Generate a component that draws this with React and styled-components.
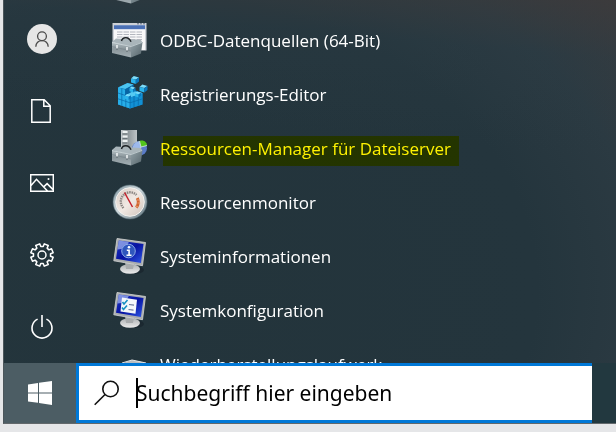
import React from "react";
import styled, { createGlobalStyle } from "styled-components";

const GlobalStyle = createGlobalStyle`
  * { box-sizing: border-box; }
  body {
    margin: 0;
    background: #e5e6e8;
    font-family: "Open Sans", "Noto Sans", sans-serif;
  }
`;

const Desktop = styled.div`
  display: flex;
  flex-direction: column;
  height: 100vh;
  padding: 0 0 8px 3px;
  background: #e5e6e8;
`;

const StartMenu = styled.main`
  display: flex;
  flex: 1;
  min-height: 0;
  overflow: hidden;
  border-left: 1px solid #4c565b;
  background:
    linear-gradient(185deg, rgba(60, 59, 60, 0.7), rgba(44, 60, 68, 0.35) 14%, rgba(36, 52, 59, 0) 38%),
    radial-gradient(ellipse 100% 130% at 25% 80%, #23343b 0%, #24353d 62%, #2b3a42 80%, #3d3b3d 98%);
`;

const Rail = styled.nav`
  display: flex;
  flex-direction: column;
  justify-content: flex-end;
  flex: none;
  width: 76px;
`;

const RailButton = styled.button`
  display: grid;
  place-items: center;
  flex: none;
  height: 72px;
  padding: 0;
  border: 0;
  background: transparent;
  color: #fff;
`;

const AppList = styled.ul`
  flex: 1;
  min-width: 0;
  margin: -40px 0 0;
  padding: 0 0 0 32px;
  list-style: none;
`;

const AppEntry = styled.button`
  display: flex;
  align-items: center;
  gap: 12px;
  width: 100%;
  height: 54px;
  padding: 0;
  border: 0;
  background: transparent;
  color: #fff;
  font: 17px/24px "Open Sans", "Noto Sans", sans-serif;
  text-align: left;
  white-space: nowrap;
`;

const AppIcon = styled.svg`
  flex: none;
  width: 36px;
  height: 36px;
  overflow: visible;
`;

const AppName = styled.span`
  position: relative;
  color: ${(p) => (p.$marked ? "#fff200" : "#fff")};
  &::after {
    content: ${(p) => (p.$marked ? '""' : "none")};
    position: absolute;
    inset: -1px -8px -5px 3px;
    background: #ff0;
    mix-blend-mode: multiply;
  }
`;

const Taskbar = styled.footer`
  display: flex;
  flex: none;
  height: 61px;
  padding-right: 24px;
  border-left: 1px solid #4c565b;
  border-bottom: 1px solid #62686b;
  background: #22383f;
`;

const StartButton = styled.button`
  display: grid;
  place-items: center;
  flex: none;
  width: 72px;
  padding: 0;
  border: 0;
  background: #4c5d64;
`;

const SearchBox = styled.label`
  display: flex;
  align-items: center;
  flex: 1;
  min-width: 0;
  padding-left: 15px;
  border: 3px solid #0078d7;
  border-right: 0;
  background: #fff;
`;

const Caret = styled.span`
  flex: none;
  width: 2px;
  height: 30px;
  margin-left: 16px;
  background: #000;
`;

const SearchInput = styled.input`
  flex: 1;
  min-width: 0;
  padding: 0;
  margin-left: -2px;
  border: 0;
  outline: 0;
  background: transparent;
  color: #000;
  font: 21px/32px "Noto Sans", "Open Sans", sans-serif;
  &::placeholder { color: #000; opacity: 1; }
`;

const UserIcon = () => (
  <svg width="30" height="30" viewBox="0 0 30 30" fill="none" stroke="#4a4a4a" strokeWidth="1.3">
    <circle cx="15" cy="15" r="15" fill="#e6e6e6" stroke="none" />
    <circle cx="15" cy="12.2" r="4.4" />
    <path d="M8.8 22.8c.3-3.700 2.800-6.100 6.200-6.100s5.900 2.400 6.200 6.100" />
  </svg>
);

const DocumentIcon = () => (
  <svg width="24" height="24" viewBox="0 0 24 24" fill="none" stroke="#fff" strokeWidth="1.5">
    <path d="M1.800.8h12.400l6 6v16.400H1.800zM13.800.8v6.400h6.400" />
  </svg>
);

const PictureIcon = () => (
  <svg width="24" height="18" viewBox="0 0 24 18" fill="none" stroke="#fff" strokeWidth="1.5">
    <path d="M.7.7h22.600v16.600H.7zM.8 11.800l5.700-6.500 11 11.600M13.700 12.900l3.400-3.300 6.200 6.300" />
    <circle cx="18.500" cy="5" r="1" fill="#fff" stroke="none" />
  </svg>
);

const gearPath = (() => {
  const pts = [];
  for (let i = 0; i < 8; i += 1) {
    const base = (i * Math.PI) / 4 + Math.PI / 8;
    [[-0.25, 8.6], [-0.19, 11.4], [0.19, 11.4], [0.25, 8.6]].forEach(([a, r]) => {
      pts.push(`${(12 + r * Math.cos(base + a)).toFixed(2)} ${(12 + r * Math.sin(base + a)).toFixed(2)}`);
    });
  }
  return `M${pts.join("L")}Z`;
})();

const GearIcon = () => (
  <svg width="24" height="24" viewBox="0 0 24 24" fill="none" stroke="#fff" strokeWidth="1.5" strokeLinejoin="round">
    <path d={gearPath} />
    <circle cx="12" cy="12" r="4" />
  </svg>
);

const PowerIcon = () => (
  <svg width="24" height="26" viewBox="0 0 24 26" fill="none" stroke="#fff" strokeWidth="1.6">
    <path d="M12 1v12M7.600 5.100a10 10 0 1 0 8.800 0" />
  </svg>
);

const WindowsLogo = () => (
  <svg width="24" height="24" viewBox="0 0 24 24" fill="#fff">
    <path d="M0 3.400 10 2v9.400H0zM11 1.800 24 0v11.400H11zM0 12.500h10v9.300L0 20.500zM11 12.500h13V24l-13-1.900z" />
  </svg>
);

const SearchIcon = () => (
  <svg width="26" height="26" viewBox="0 0 26 26" fill="none" stroke="#111" strokeWidth="1.600">
    <circle cx="16.500" cy="9" r="7.700" />
    <path d="M11 14.500.700 24.800" />
  </svg>
);

const Toolbox = ({ id }) => (
  <g>
    <defs>
      <linearGradient id={`${id}-front`} x1="0" y1="0" x2="0" y2="1">
        <stop offset="0" stopColor="#b4bfc3" />
        <stop offset=".45" stopColor="#8a969b" />
        <stop offset="1" stopColor="#a3afb4" />
      </linearGradient>
      <linearGradient id={`${id}-side`} x1="0" y1="0" x2="1" y2="1">
        <stop offset="0" stopColor="#93a2a8" />
        <stop offset="1" stopColor="#56656b" />
      </linearGradient>
    </defs>
    <path d="M0 19 4 15.500 29 17l1.500 3L19 24z" fill="#a9b5ba" />
    <path d="M0 19l19 4v11.500L0 30z" fill={`url(#${id}-front)`} />
    <path d="M19 23l11.500-4-1.500 11.500-10 4z" fill={`url(#${id}-side)`} />
    <path d="M0 19.500 19 23.500l11-4" fill="none" stroke="#d3dcdf" strokeWidth=".7" />
    <path d="M0 23.500 19 28" fill="none" stroke="#75828a" strokeWidth=".6" />
    <path d="M9.500 18c1-4.500 7.500-4.500 9.500.8" fill="none" stroke="#202528" strokeWidth="1.500" />
    <path d="M4.200 22h1.600v4H4.200zM14.200 24h1.600v4h-1.600z" fill="#eef2f3" />
    <path d="M4 26h2M14 28h2" stroke="#59646a" />
  </g>
);

const OdbcIcon = ({ id }) => (
  <AppIcon viewBox="0 0 36 36" aria-hidden="true">
    <path d="M.500 0h34v27.500H.500z" fill="#cdd1d7" />
    <path d="M2 2h31v25H2z" fill="#f8f8f9" />
    <path d="M2 2.200h31v4H2z" fill="#4a70b5" />
    <path d="M25 .800h2m1 0h2m1 0h2" stroke="#536277" strokeWidth=".9" />
    <path d="M5 9h25M5 11.500h25M5 14h25M5 16.500h25M5 19h25" stroke="#aaaeb7" strokeWidth=".9" strokeDasharray="5.500 1" />
    <Toolbox id={id} />
  </AppIcon>
);

const Cube = ({ x, y, s = 4 }) => (
  <g transform={`translate(${x} ${y})`}>
    <path d={`M${-s * 0.3} ${-s}L${s} ${-s * 0.6}L${s * 0.2} ${-s * 0.1}L${-s} ${-s * 0.4}z`} fill="#7bdcfb" />
    <path d={`M${-s} ${-s * 0.4}L${s * 0.2} ${-s * 0.1}V${s}L${-s} ${s * 0.6}z`} fill="#2bb4ec" />
    <path d={`M${s} ${-s * 0.6}L${s * 0.2} ${-s * 0.1}V${s}L${s} ${s * 0.4}z`} fill="#0a78bd" />
  </g>
);

const RegistryIcon = () => (
  <AppIcon viewBox="0 0 36 36" aria-hidden="true">
    <path d="M6 10.500 15.500 6l6 1.500v5l9 3.500v11.500L18 31.500 6 27.500z" fill="#0a72b4" />
    <path d="M6 10.500 15.500 6l6 1.500-8 4.500z" fill="#4cc4f0" />
    <path d="M6 10.500l7 2v6l5 1.500v11.500L6 27.500z" fill="#27aee8" />
    <path d="M13.500 12l8-4v6l-8 4.500z" fill="#0864a3" />
    <path d="M18 20.500l12.500-4.500v11.500L18 31.500z" fill="#1290d4" />
    <path d="M13 18.500l8.500-4.500 9 2L18 20.500z" fill="#55caf3" />
    <path d="M6 16l12 4M6 21.800l12 4 12.500-4M9.800 11.500V29M13.800 12.500v17.500M18 20.500v11M22 19v11M26.300 17.500v11" fill="none" stroke="#0768a8" strokeWidth=".7" />
    <Cube x={20.5} y={12.5} s={3} />
    <Cube x={16} y={20} s={3} />
    <Cube x={26} y={17.5} s={3} />
    <Cube x={23} y={3} s={4} />
    <Cube x={31.500} y={11.500} s={4} />
  </AppIcon>
);

const FileServerIcon = () => (
  <AppIcon viewBox="0 0 36 36" aria-hidden="true">
    <defs>
      <linearGradient id="tower">
        <stop offset="0" stopColor="#c8ced1" />
        <stop offset=".4" stopColor="#8b9498" />
        <stop offset="1" stopColor="#bdc4c7" />
      </linearGradient>
    </defs>
    <path d="M9-1h16v20H9z" fill="url(#tower)" />
    <path d="M10 0h6v18h-6z" fill="#a1a9ac" />
    <path d="M10.500 1h5M10.500 5.500h5M10.500 10h5" stroke="#edf2f2" strokeWidth="2" />
    <path d="M10.500 3h5M10.500 7.500h5M10.500 12h5" stroke="#5a666b" strokeWidth=".8" />
    <ellipse cx="27.500" cy="17.500" rx="7.500" ry="7" fill="#5a7cc8" />
    <path d="M20.500 18c0-5 4-8 7-8l1.500 5.500-5 7z" fill="#9db9ec" />
    <path d="M29 16l-1.500-6c4-1.500 7.500 1 7.500 4.500z" fill="#52c51c" />
    <path d="M24 22.500 29 16l6-1.500M29 16l-1.500-6" fill="none" stroke="#dcebe8" strokeWidth=".8" />
    <Toolbox id="server" />
  </AppIcon>
);

const GaugeIcon = () => (
  <AppIcon viewBox="0 0 36 36" aria-hidden="true">
    <defs>
      <linearGradient id="rim" x1="0" y1="0" x2="1" y2="1">
        <stop offset="0" stopColor="#7d939c" />
        <stop offset=".45" stopColor="#cfd9dd" />
        <stop offset="1" stopColor="#5b6f78" />
      </linearGradient>
      <linearGradient id="dial" x1="0" y1="0" x2="1" y2="1">
        <stop offset="0" stopColor="#d6cbc3" />
        <stop offset=".5" stopColor="#f1e9e3" />
        <stop offset="1" stopColor="#cfc3bb" />
      </linearGradient>
    </defs>
    <circle cx="18" cy="17" r="17" fill="url(#rim)" stroke="#566c75" strokeWidth=".6" />
    <circle cx="18" cy="17" r="14.300" fill="url(#dial)" stroke="#f2f2f0" strokeWidth="1" />
    <path d="M11.500 23a9 9 0 0 1 13-13" fill="none" stroke="#8b8683" strokeWidth="2.400" strokeDasharray="1.500 .8" />
    <path d="M25.300 13a9 9 0 0 1-1 9.500" fill="none" stroke="#d2652f" strokeWidth="3" />
    <path d="M25.500 18h3M25 15h3M24 21l2 1" stroke="#f3b18f" strokeWidth=".7" />
    <path d="M12.500 7.500 20.500 22" stroke="#c4202b" strokeWidth="1.500" />
  </AppIcon>
);

const MonitorIcon = ({ id, children }) => (
  <AppIcon viewBox="0 0 36 36" aria-hidden="true">
    <defs>
      <linearGradient id={`${id}-screen`} x1="0" y1="0" x2="1" y2="1">
        <stop offset="0" stopColor="#2038c8" />
        <stop offset=".5" stopColor="#0612a0" />
        <stop offset="1" stopColor="#2f58e6" />
      </linearGradient>
      <linearGradient id={`${id}-base`} x1="0" y1="0" x2="0" y2="1">
        <stop offset="0" stopColor="#aeb1b3" />
        <stop offset="1" stopColor="#ececec" />
      </linearGradient>
    </defs>
    <ellipse cx="23" cy="31" rx="9" ry="4" fill="#152229" opacity=".6" />
    <ellipse cx="18" cy="30" rx="10" ry="4.800" fill={`url(#${id}-base)`} />
    <path d="M13 23l9 2-1 5h-7z" fill="#a8abad" />
    <path d="M5-.500 33.500 3.500l-3 23.200L1.800 21.800z" fill="#a9acae" stroke="#d4d5d6" strokeWidth=".8" />
    <path d="M6.800 1.500l24.700 3.500-2.600 19L4 19.700z" fill={`url(#${id}-screen)`} />
    <path d="M6.800 1.500l10 1.400Q14 10 5.500 10.500z" fill="#9fb2ee" opacity=".75" />
    {children}
  </AppIcon>
);

const InfoMonitorIcon = () => (
  <MonitorIcon id="info">
    <circle cx="16.500" cy="12" r="6.800" fill="#2f56bd" stroke="#8ba8e8" strokeWidth="1" />
    <circle cx="17" cy="8.200" r="1.300" fill="#fff" />
    <path d="M14.800 11.300h2.300v5M14.500 16.300h5" fill="none" stroke="#fff" strokeWidth="1.600" />
  </MonitorIcon>
);

const ChecklistMonitorIcon = () => (
  <MonitorIcon id="check">
    <path d="M10 4.500l15 2.300-1.500 14-15-2.200z" fill="#f4f7fa" />
    <path d="M10.500 9l1.500 2 3.500-4M10 14.500l1.500 2 3.500-4" fill="none" stroke="#168fc2" strokeWidth="1.600" />
    <path d="M17 11.500l5 .7M16.500 16.500l5 .7" stroke="#6f7a9e" strokeWidth="1.200" />
  </MonitorIcon>
);

const DriveIcon = () => (
  <AppIcon viewBox="0 0 36 36" aria-hidden="true">
    <path d="M6 18l14-5 14 3-2 12-13 4-13-5z" fill="#b9bdbf" />
    <path d="M10 16l10-3 14 3" fill="none" stroke="#e7e7e7" strokeWidth="1" />
  </AppIcon>
);

const railItems = [
  { label: "Benutzer", icon: <UserIcon /> },
  { label: "Dokumente", icon: <DocumentIcon /> },
  { label: "Bilder", icon: <PictureIcon /> },
  { label: "Einstellungen", icon: <GearIcon /> },
  { label: "Ein/Aus", icon: <PowerIcon /> },
];

const apps = [
  { name: "ODBC Data Sources (32-bit)", icon: <OdbcIcon id="odbc32" /> },
  { name: "ODBC-Datenquellen (64-Bit)", icon: <OdbcIcon id="odbc64" /> },
  { name: "Registrierungs-Editor", icon: <RegistryIcon /> },
  { name: "Ressourcen-Manager für Dateiserver", icon: <FileServerIcon />, marked: true },
  { name: "Ressourcenmonitor", icon: <GaugeIcon /> },
  { name: "Systeminformationen", icon: <InfoMonitorIcon /> },
  { name: "Systemkonfiguration", icon: <ChecklistMonitorIcon /> },
  { name: "Wiederherstellungslaufwerk", icon: <DriveIcon /> },
];

export default function App() {
  return (
    <>
      <GlobalStyle />
      <Desktop>
        <StartMenu>
          <Rail>
            {railItems.map((item) => (
              <RailButton key={item.label} type="button" aria-label={item.label}>
                {item.icon}
              </RailButton>
            ))}
          </Rail>
          <AppList>
            {apps.map((app) => (
              <li key={app.name}>
                <AppEntry type="button">
                  {app.icon}
                  <AppName $marked={app.marked}>{app.name}</AppName>
                </AppEntry>
              </li>
            ))}
          </AppList>
        </StartMenu>
        <Taskbar>
          <StartButton type="button" aria-label="Start">
            <WindowsLogo />
          </StartButton>
          <SearchBox>
            <SearchIcon />
            <Caret />
            <SearchInput type="text" aria-label="Suche" placeholder="Suchbegriff hier eingeben" />
          </SearchBox>
        </Taskbar>
      </Desktop>
    </>
  );
}
